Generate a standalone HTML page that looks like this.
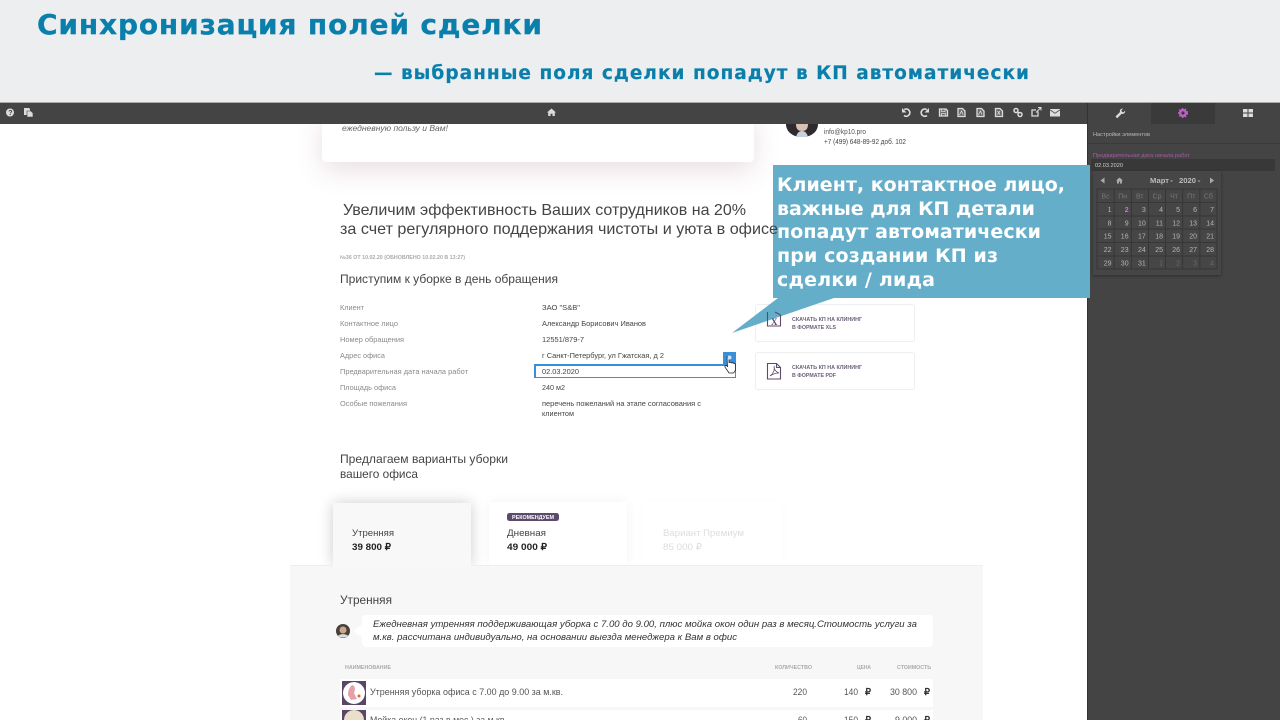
<!DOCTYPE html>
<html><head><meta charset="utf-8"><style>
html,body{margin:0;padding:0;width:1280px;height:720px;overflow:hidden;background:#fff}
div{position:absolute}
#p{left:0;top:0;width:1280px;height:720px;overflow:hidden;filter:blur(.3px)}
svg{position:absolute;left:0;top:0}
text{font-family:"Liberation Sans",sans-serif;white-space:pre}
.d{font-family:"DejaVu Sans",sans-serif;font-weight:bold}
.t{fill:#0a7fab;stroke:#0a7fab;stroke-width:.3px}
.c{fill:#fff;font-size:19px}
.l{fill:#8a8a8a;font-size:7.5px}
.v{fill:#444;font-size:7.5px}
.s{fill:#6d5f7a;font-size:5.5px;font-weight:bold}
.h{fill:#aaa;font-size:5.5px;font-weight:bold}
.r{fill:#555;font-size:9.5px}
.n{fill:#b5b5b5;font-size:7px;text-anchor:end}
.o{fill:#6a6a6a;font-size:7px;text-anchor:end}
.w{fill:#777;font-size:7px;text-anchor:middle}
</style></head><body><div id="p">
<div style="left:322px;top:110px;width:432px;height:52px;background:#fff;border-radius:4px;box-shadow:0 9px 26px rgba(150,100,120,.2)"></div>
<div style="left:333px;top:503px;width:138px;height:63px;background:#f8f8f8;box-shadow:0 0 14px rgba(0,0,0,.2)"></div>
<div style="left:489px;top:502px;width:138px;height:63px;background:#fff;box-shadow:0 0 12px rgba(0,0,0,.05)"></div>
<div style="left:643px;top:502px;width:140px;height:63px;background:#fff;box-shadow:0 0 8px rgba(0,0,0,.02)"></div>
<div style="left:290px;top:565px;width:693px;height:155px;background:#f7f7f7;border-top:1px solid #eee;box-sizing:border-box"></div>
<div style="left:333px;top:560px;width:138px;height:7px;background:#f8f8f8"></div>
<div style="left:755px;top:304px;width:158px;height:36px;background:#fff;border:1px solid #eee;border-radius:3px"></div>
<div style="left:755px;top:352px;width:158px;height:36px;background:#fff;border:1px solid #eee;border-radius:3px"></div>
<div style="left:534px;top:364px;width:199px;height:11px;border:1px solid #3a8fd8;border-top-width:2px;border-left-width:2px"></div>
<div style="left:723px;top:352px;width:13px;height:13px;background:#3a8fd8"></div>
<div style="left:362px;top:615px;width:571px;height:32px;background:#fff;border-radius:4px"></div>
<div style="left:340px;top:679px;width:593px;height:28px;background:#fff"></div>
<div style="left:340px;top:710px;width:593px;height:10px;background:#fff"></div>
<div style="left:0;top:0;width:1280px;height:102px;background:#edeef0"></div>
<div style="left:0;top:102px;width:1280px;height:1px;background:#aaa"></div>
<div style="left:0;top:103px;width:1280px;height:21px;background:#444"></div>
<div style="left:1087px;top:103px;width:193px;height:617px;background:#444;border-left:1px solid #333;box-sizing:border-box"></div>
<div style="left:1151px;top:103px;width:64px;height:21px;background:#3a3a3a"></div>
<div style="left:1088px;top:143px;width:192px;height:1px;background:#3a3a3a"></div>
<div style="left:1091px;top:159px;width:184px;height:12px;background:#383838"></div>
<div style="left:1093px;top:171px;width:128px;height:104px;background:#464646;box-shadow:0 1px 3px rgba(0,0,0,.35)"></div>
<div style="left:773px;top:165px;width:317px;height:133px;background:#65aec9"></div>
<svg width="1280" height="720" viewBox="0 0 1280 720">
<polygon points="778,298 834,298 732,333" fill="#65aec9"/>
<polygon points="353,631 363,624 363,638" fill="#fff"/>
<path d="M786 124h32c0 8-7 13-16 13s-16-5-16-13z" fill="#2e2a2e"/><path d="M796 124h12c0 5-2 7-6 7s-6-2-6-7z" fill="#d8c0b4"/><path d="M796 137c1-4 3-6 6-6s5 2 6 6z" fill="#c8d0dc"/>
<g font-size="0">
<text class="d t" x="37" y="34" style="font-size:28px" textLength="505" lengthAdjust="spacing">Синхронизация полей сделки</text>
<text class="d t" x="374" y="79" style="font-size:18.500px;stroke-width:.2px" textLength="655" lengthAdjust="spacing">— выбранные поля сделки попадут в КП автоматически</text>
<text class="d c" x="777" y="191" textLength="288" lengthAdjust="spacing">Клиент, контактное лицо,</text>
<text class="d c" x="777" y="215" textLength="258" lengthAdjust="spacing">важные для КП детали</text>
<text class="d c" x="777" y="238" textLength="264" lengthAdjust="spacing">попадут автоматически</text>
<text class="d c" x="777" y="262" textLength="221" lengthAdjust="spacing">при создании КП из</text>
<text class="d c" x="777" y="286" textLength="158" lengthAdjust="spacing">сделки / лида</text>
<text x="342" y="131" fill="#666" font-style="italic" style="font-size:8.5px" textLength="106" lengthAdjust="spacingAndGlyphs">ежедневную пользу и Вам!</text>
<text x="824" y="134" fill="#555" style="font-size:7px" textLength="42" lengthAdjust="spacingAndGlyphs">info@kp10.pro</text>
<text x="824" y="144" fill="#444" style="font-size:7px" textLength="82" lengthAdjust="spacingAndGlyphs">+7 (499) 648-89-92 доб. 102</text>
<text x="343" y="215" fill="#444" style="font-size:16px" textLength="403" lengthAdjust="spacingAndGlyphs">Увеличим эффективность Ваших сотрудников на 20%</text>
<text x="340" y="234" fill="#444" style="font-size:16px" textLength="438" lengthAdjust="spacingAndGlyphs">за счет регулярного поддержания чистоты и уюта в офисе</text>
<text x="340" y="259" fill="#aaa" font-weight="bold" style="font-size:5.5px" textLength="125" lengthAdjust="spacingAndGlyphs">№36 ОТ 10.02.20 (ОБНОВЛЕНО 10.02.20 В 13:27)</text>
<text x="340" y="283" fill="#444" style="font-size:12px" textLength="218" lengthAdjust="spacingAndGlyphs">Приступим к уборке в день обращения</text>
<text class="l" x="340" y="310" textLength="24" lengthAdjust="spacingAndGlyphs">Клиент</text>
<text class="l" x="340" y="326" textLength="58" lengthAdjust="spacingAndGlyphs">Контактное лицо</text>
<text class="l" x="340" y="342" textLength="64" lengthAdjust="spacingAndGlyphs">Номер обращения</text>
<text class="l" x="340" y="358" textLength="45" lengthAdjust="spacingAndGlyphs">Адрес офиса</text>
<text class="l" x="340" y="374" textLength="128" lengthAdjust="spacingAndGlyphs">Предварительная дата начала работ</text>
<text class="l" x="340" y="390" textLength="56" lengthAdjust="spacingAndGlyphs">Площадь офиса</text>
<text class="l" x="340" y="406" textLength="67" lengthAdjust="spacingAndGlyphs">Особые пожелания</text>
<text class="v" x="542" y="310" textLength="38" lengthAdjust="spacingAndGlyphs">ЗАО "S&amp;B"</text>
<text class="v" x="542" y="326" textLength="104" lengthAdjust="spacingAndGlyphs">Александр Борисович Иванов</text>
<text class="v" x="542" y="342" textLength="42" lengthAdjust="spacingAndGlyphs">12551/879-7</text>
<text class="v" x="542" y="358" textLength="122" lengthAdjust="spacingAndGlyphs">г Санкт-Петербург, ул Гжатская, д 2</text>
<text class="v" x="542" y="374" textLength="37" lengthAdjust="spacingAndGlyphs">02.03.2020</text>
<text class="v" x="542" y="390" textLength="23" lengthAdjust="spacingAndGlyphs">240 м2</text>
<text class="v" x="542" y="406" textLength="159" lengthAdjust="spacingAndGlyphs">перечень пожеланий на этапе согласования с</text>
<text class="v" x="542" y="416" textLength="32" lengthAdjust="spacingAndGlyphs">клиентом</text>
<text class="s" x="792" y="321" textLength="70" lengthAdjust="spacingAndGlyphs">СКАЧАТЬ КП НА КЛИНИНГ</text>
<text class="s" x="792" y="329" textLength="44" lengthAdjust="spacingAndGlyphs">В ФОРМАТЕ XLS</text>
<text class="s" x="792" y="369" textLength="70" lengthAdjust="spacingAndGlyphs">СКАЧАТЬ КП НА КЛИНИНГ</text>
<text class="s" x="792" y="377" textLength="44" lengthAdjust="spacingAndGlyphs">В ФОРМАТЕ PDF</text>
<text x="340" y="463" fill="#444" style="font-size:12px" textLength="168" lengthAdjust="spacingAndGlyphs">Предлагаем варианты уборки</text>
<text x="340" y="478" fill="#444" style="font-size:12px" textLength="78" lengthAdjust="spacingAndGlyphs">вашего офиса</text>
<text x="352" y="536" fill="#444" style="font-size:9.5px" textLength="42" lengthAdjust="spacingAndGlyphs">Утренняя</text>
<text x="352" y="550" fill="#222" font-weight="bold" style="font-size:9.5px" textLength="39" lengthAdjust="spacingAndGlyphs">39 800 ₽</text>
<rect x="507" y="513" width="52" height="8" rx="2.5" fill="#5c4a6c"/>
<text x="512" y="519" fill="#fff" font-weight="bold" style="font-size:5.5px" textLength="42" lengthAdjust="spacingAndGlyphs">РЕКОМЕНДУЕМ</text>
<text x="507" y="536" fill="#444" style="font-size:9.5px" textLength="39" lengthAdjust="spacingAndGlyphs">Дневная</text>
<text x="507" y="550" fill="#222" font-weight="bold" style="font-size:9.5px" textLength="40" lengthAdjust="spacingAndGlyphs">49 000 ₽</text>
<text x="663" y="536" fill="#ddd" style="font-size:9.5px" textLength="81" lengthAdjust="spacingAndGlyphs">Вариант Премиум</text>
<text x="663" y="550" fill="#ddd" style="font-size:9.5px" textLength="39" lengthAdjust="spacingAndGlyphs">85 000 ₽</text>
<text x="340" y="604" fill="#444" style="font-size:11.5px" textLength="52" lengthAdjust="spacingAndGlyphs">Утренняя</text>
<text x="373" y="627" fill="#333" font-style="italic" style="font-size:9.5px" textLength="544" lengthAdjust="spacingAndGlyphs">Ежедневная утренняя поддерживающая уборка с 7.00 до 9.00, плюс мойка окон один раз в месяц.Стоимость услуги за</text>
<text x="373" y="640" fill="#333" font-style="italic" style="font-size:9.5px" textLength="364" lengthAdjust="spacingAndGlyphs">м.кв. рассчитана индивидуально, на основании выезда менеджера к Вам в офис</text>
<text class="h" x="345" y="669" textLength="46" lengthAdjust="spacingAndGlyphs">НАИМЕНОВАНИЕ</text>
<text class="h" x="775" y="669" textLength="37" lengthAdjust="spacingAndGlyphs">КОЛИЧЕСТВО</text>
<text class="h" x="857" y="669" textLength="14" lengthAdjust="spacingAndGlyphs">ЦЕНА</text>
<text class="h" x="897" y="669" textLength="34" lengthAdjust="spacingAndGlyphs">СТОИМОСТЬ</text>
<text class="r" x="370" y="695" textLength="193" lengthAdjust="spacingAndGlyphs">Утренняя уборка офиса с 7.00 до 9.00 за м.кв.</text>
<text class="r" x="793" y="695" textLength="14" lengthAdjust="spacingAndGlyphs">220</text>
<text class="r" x="844" y="695" textLength="14" lengthAdjust="spacingAndGlyphs">140</text>
<text x="865" y="695" fill="#333" font-weight="bold" style="font-size:9.5px">₽</text>
<text class="r" x="890" y="695" textLength="27" lengthAdjust="spacingAndGlyphs">30 800</text>
<text x="924" y="695" fill="#333" font-weight="bold" style="font-size:9.5px">₽</text>
<text class="r" x="370" y="723" textLength="137" lengthAdjust="spacingAndGlyphs">Мойка окон (1 раз в мес.) за м.кв.</text>
<text class="r" x="798" y="723" textLength="9" lengthAdjust="spacingAndGlyphs">60</text>
<text class="r" x="844" y="723" textLength="14" lengthAdjust="spacingAndGlyphs">150</text>
<text x="865" y="723" fill="#333" font-weight="bold" style="font-size:9.5px">₽</text>
<text class="r" x="895" y="723" textLength="22" lengthAdjust="spacingAndGlyphs">9 000</text>
<text x="924" y="723" fill="#333" font-weight="bold" style="font-size:9.5px">₽</text>
<text x="1093" y="136" fill="#bbb" style="font-size:5.5px" textLength="57" lengthAdjust="spacingAndGlyphs">Настройки элементов</text>
<text x="1093" y="157" fill="#a85aa8" style="font-size:5.5px" textLength="97" lengthAdjust="spacingAndGlyphs">Предварительная дата начала работ</text>
<text x="1095" y="167" fill="#ccc" style="font-size:5.5px" textLength="28" lengthAdjust="spacingAndGlyphs">02.03.2020</text>
<text x="1150" y="183" fill="#bbb" font-weight="bold" style="font-size:7px" textLength="19" lengthAdjust="spacingAndGlyphs">Март</text>
<text x="1179" y="183" fill="#bbb" font-weight="bold" style="font-size:7px" textLength="17" lengthAdjust="spacingAndGlyphs">2020</text>
<path d="M1170 180.500h3l-1.500 1.500zM1197.500 180.500h3l-1.500 1.500z" fill="#aaa"/>
<path d="M1104.500 177.500v6l-4-3zM1210 177.500v6l4-3z" fill="#aaa"/>
<path d="M1116 180.500l3.500-3 3.500 3h-1v3h-2v-2h-1v2h-2v-3z" fill="#aaa"/>
<g fill="none" stroke="#333" stroke-width=".8">
<rect x="1097" y="189" width="120" height="80"/>
<path d="M1097 202.500h120M1097 216h120M1097 229h120M1097 242.500h120M1097 256h120M1114.100 189v80M1131.300 189v80M1148.400 189v80M1165.600 189v80M1182.700 189v80M1199.900 189v80"/>
</g>
<text class="w" x="1105.500" y="198.500">Вс</text><text class="w" x="1122.700" y="198.500">Пн</text><text class="w" x="1139.800" y="198.500">Вт</text><text class="w" x="1157" y="198.500">Ср</text><text class="w" x="1174.100" y="198.500">Чт</text><text class="w" x="1191.300" y="198.500">Пт</text><text class="w" x="1208.400" y="198.500">Сб</text>
<text class="n" x="1111.500" y="212">1</text><text x="1128.600" y="212" text-anchor="end" fill="#d070d0" font-weight="bold" style="font-size:7px">2</text><text class="n" x="1145.800" y="212">3</text><text class="n" x="1163" y="212">4</text><text class="n" x="1180" y="212">5</text><text class="n" x="1197" y="212">6</text><text class="n" x="1214" y="212">7</text>
<text class="n" x="1111.500" y="225.500">8</text><text class="n" x="1128.600" y="225.500">9</text><text class="n" x="1145.800" y="225.500">10</text><text class="n" x="1163" y="225.500">11</text><text class="n" x="1180" y="225.500">12</text><text class="n" x="1197" y="225.500">13</text><text class="n" x="1214" y="225.500">14</text>
<text class="n" x="1111.500" y="238.500">15</text><text class="n" x="1128.600" y="238.500">16</text><text class="n" x="1145.800" y="238.500">17</text><text class="n" x="1163" y="238.500">18</text><text class="n" x="1180" y="238.500">19</text><text class="n" x="1197" y="238.500">20</text><text class="n" x="1214" y="238.500">21</text>
<text class="n" x="1111.500" y="252">22</text><text class="n" x="1128.600" y="252">23</text><text class="n" x="1145.800" y="252">24</text><text class="n" x="1163" y="252">25</text><text class="n" x="1180" y="252">26</text><text class="n" x="1197" y="252">27</text><text class="n" x="1214" y="252">28</text>
<text class="n" x="1111.500" y="265.500">29</text><text class="n" x="1128.600" y="265.500">30</text><text class="n" x="1145.800" y="265.500">31</text><text class="o" x="1163" y="265.500">1</text><text class="o" x="1180" y="265.500">2</text><text class="o" x="1197" y="265.500">3</text><text class="o" x="1214" y="265.500">4</text>
</g>
<circle cx="343" cy="631" r="7" fill="#4a4038"/><circle cx="343" cy="630" r="3.500" fill="#c8a890"/><path d="M338 636c2-2.500 8-2.500 10 0-2 2-8 2-10 0z" fill="#dcdcdc"/>
<rect x="342" y="681" width="24" height="24" fill="#5a4668"/><circle cx="354" cy="693" r="11" fill="#fff"/><path d="M352 685c4 1 3 5 2 8l3 6-6 1-3-5c0-4 1-7 4-10z" fill="#e8a0a8"/><circle cx="359" cy="696" r="1.500" fill="#f06030"/>
<rect x="342" y="710" width="24" height="10" fill="#5a4668"/><circle cx="354" cy="720" r="10" fill="#eadfc8"/>
<g fill="none" stroke="#5c4a6c" stroke-width="1.100">
<path d="M767.500 312v14h13v-11M775 312l5.500 3"/>
<path d="M767.500 363.500h9l4 4v11.500h-13zM776.500 363.500v4h4"/>
<path d="M770 376c3-2 5-6 4-10 0 4 2 6 5 7-3 0-6 1-9 3z" stroke-width=".8"/>
</g>
<text x="771" y="325" fill="#5c4a6c" font-weight="bold" style="font-size:9px;font-family:'Liberation Serif',serif">X</text>
<path d="M727 357.500c0-1.500 2-1.500 2 0v5l1 0c1-.5 2 0 2 .5 1-.5 2 0 2 .5 1 0 1.500 .5 1.500 1.500v4c0 2-1 3-2 4h-4.500c-1-2-3-4-4-6-.5-1.500 1-2 2-1l.5 1z" fill="#fff" stroke="#222" stroke-width=".8"/>
<circle cx="729.500" cy="357.500" r="2" fill="#cfe4f6"/>
<g fill="#dcdcdc">
<circle cx="10" cy="112.500" r="4"/><text x="8.300" y="115" fill="#444" font-weight="bold" style="font-size:7px">?</text>
<path d="M24 108h5l1 1v6h-6z"/><path d="M27 111h4l2 2v4h-6z" stroke="#444" stroke-width=".6"/>
<path d="M547 112.500l4.500-4 4.500 4h-1.200v3.500h-2.300v-2.300h-2v2.300h-2.300v-3.500z"/>
<path d="M902 108v4.500h4.500z"/><path d="M929 108v4.500h-4.500z"/>
<path d="M940 109h6l1.500 1.500v5.500h-7.500z" opacity=".25"/>
<path d="M958 108.500h4.500l2.500 2.500v5.500h-7z" opacity=".25"/>
<path d="M977 108.500h4.500l2.500 2.500v5.500h-7z" opacity=".25"/>
<path d="M995.500 108.500h4.500l2.500 2.500v5.500h-7z" opacity=".25"/>
</g>
<g fill="none" stroke="#dcdcdc" stroke-width="1.300">
<path d="M904.300 109.600A3.600 3.600 0 1 1 904 115.500" stroke-width="1.700"/>
<path d="M926.700 109.600A3.600 3.600 0 1 0 927 115.500" stroke-width="1.700"/>
<path d="M939.500 109h6.500l1.500 1.500v5.500h-8z"/><path d="M941.500 109v2.500h3.500V109M941.500 116v-2.500h4v2.500" stroke-width=".8"/>
<path d="M958 108.500h4.500l2.500 2.500v5.500h-7z"/><path d="M959.500 115l2-4 1.500 3.500" stroke-width=".8"/>
<path d="M977 108.500h4.500l2.500 2.500v5.500h-7z"/><path d="M978.500 115l2-4 1.500 3.500" stroke-width=".8"/>
<path d="M995.500 108.500h4.500l2.500 2.500v5.500h-7z"/><path d="M997.500 111l2.500 3.500M1000 111l-2.500 3.500" stroke-width=".8"/>
<circle cx="1016" cy="110.500" r="2" stroke-width="1.500"/><circle cx="1020" cy="114.500" r="2" stroke-width="1.500"/><path d="M1017 111.500l2 2" stroke-width="1.500"/>
<path d="M1038 111.500v4.500h-6v-6h4"/><path d="M1036 112.500l5-5M1038 107.500h3v3" stroke-width="1"/>
</g>
<rect x="1050" y="109" width="10" height="7.500" fill="#dcdcdc"/><path d="M1050 109.800l5 3.500 5-3.500" fill="none" stroke="#444" stroke-width=".8"/>
<path d="M1115.500 116.500l4.500-4.500c-.6-2 1-3.800 3-3.300l-1.700 1.700 .6 1.400 1.400 .6 1.700-1.700c.5 2-1.300 3.600-3.300 3l-4.500 4.500z" fill="#ddd"/>
<circle cx="1183" cy="113" r="2.800" fill="none" stroke="#c060c8" stroke-width="2.400"/>
<circle cx="1183" cy="113" r="4.400" fill="none" stroke="#c060c8" stroke-width="1.200" stroke-dasharray="1.700 1.500"/>
<path d="M1243 109h4.500v3.500h-4.500zM1248.500 109h4.500v3.500h-4.500zM1243 113.500h4.500v3.500h-4.500zM1248.500 113.500h4.500v3.500h-4.500z" fill="#ddd"/>
</svg>
</div></body></html>
